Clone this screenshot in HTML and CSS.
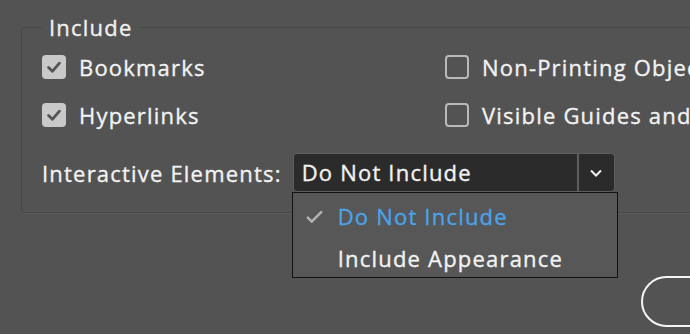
FILE: index.html
```html
<!DOCTYPE html>
<html lang="en">
<head>
    <meta charset="UTF-8">
    <title>Export Options</title>
    <link rel="stylesheet" href="styles.css">
</head>
<body>
    <div class="panel">
        <!-- Include group -->
        <fieldset class="group">
            <legend>Include</legend>
            <div class="options">
                <label class="check"><span class="box checked"><svg viewBox="0 0 22 22"><path d="M6 11.5l3.5 3.5 6.5-7.5" /></svg></span>Bookmarks</label>
                <label class="check"><span class="box"></span>Non-Printing Objects</label>
                <label class="check"><span class="box checked"><svg viewBox="0 0 22 22"><path d="M6 11.5l3.5 3.5 6.5-7.5" /></svg></span>Hyperlinks</label>
                <label class="check"><span class="box"></span>Visible Guides and Grids</label>
            </div>
            <div class="field">
                <span class="field-label">Interactive Elements:</span>
                <div class="select">
                    <span class="select-value">Do Not Include</span>
                    <span class="select-arrow"><svg viewBox="0 0 16 10"><path d="M3 2.5l5 5 5-5" /></svg></span>
                    <ul class="menu">
                        <li class="selected"><svg class="tick" viewBox="0 0 20 14"><path d="M2 7.5l5 5 11-11" /></svg>Do Not Include</li>
                        <li>Include Appearance</li>
                    </ul>
                </div>
            </div>
        </fieldset>

        <div class="footer">
            <button class="btn">Cancel</button>
        </div>
    </div>
</body>
</html>
```

FILE: styles.css
```css
body {
    margin: 0;
    background-color: #535353;
    color: #f2f2f2;
    font-family: "Open Sans", "Noto Sans", sans-serif;
    font-size: 22px;
    letter-spacing: 1.2px;
    -webkit-text-stroke: 0.35px currentColor;
    overflow: hidden;
    height: 334px;
}

.panel {
    width: 760px;
}

.group {
    margin: 15px 0 0 21px;
    padding: 0 0 0 20px;
    border: 1px solid #474747;
    border-radius: 3px;
    box-shadow: 0 1px 0 #5b5b5b;
    width: 760px;
    height: 198px;
    box-sizing: border-box;
}

.group legend {
    padding: 0 7px;
    line-height: 24px;
    color: #efefef;
}

.options {
    display: grid;
    grid-template-columns: 403px auto;
    row-gap: 23px;
    margin-top: 15px;
}

.check {
    display: flex;
    align-items: center;
    height: 25px;
    white-space: nowrap;
}

.box {
    width: 20px;
    height: 20px;
    border: 2px solid #b9b9b9;
    border-radius: 4px;
    margin-right: 13px;
    flex-shrink: 0;
}

.box.checked {
    width: 24px;
    height: 24px;
    border: none;
    background: #c9c9c9;
}

.box svg {
    width: 24px;
    height: 24px;
    display: block;
}

.box svg path {
    fill: none;
    stroke: #555;
    stroke-width: 2.6;
    stroke-linecap: round;
    stroke-linejoin: round;
}

.field {
    display: flex;
    align-items: center;
    margin-top: 26px;
}

.field-label {
    margin-right: 11px;
}

.select {
    position: relative;
    display: flex;
    width: 322px;
    height: 39px;
    background: #2b2b2b;
    border: 1px solid #5e5e5e;
    border-radius: 4px;
    box-sizing: border-box;
}

.select-value {
    flex: 1;
    padding-left: 8px;
    line-height: 37px;
}

.select-arrow {
    width: 35px;
    border-left: 2px solid #5e5e5e;
    display: flex;
    align-items: center;
    justify-content: center;
}

.select-arrow svg {
    width: 16px;
    height: 10px;
}

.select-arrow path {
    fill: none;
    stroke: #f2f2f2;
    stroke-width: 2;
}

.menu {
    position: absolute;
    top: 38px;
    left: -2px;
    width: 326px;
    margin: 0;
    padding: 2px 0 0;
    list-style: none;
    background: #575757;
    border: 1px solid #111;
    box-sizing: border-box;
}

.menu li {
    position: relative;
    padding-left: 45px;
    height: 42px;
    line-height: 42px;
}

.menu li:last-child {
    height: 40px;
}

.menu li.selected {
    color: #4aa3ea;
}

.tick {
    position: absolute;
    left: 12px;
    top: 15px;
    width: 19px;
    height: 13px;
}

.tick path {
    fill: none;
    stroke: #b3b3b3;
    stroke-width: 2.6;
}

.footer {
    display: flex;
    justify-content: flex-end;
    margin-top: 63px;
}

.btn {
    width: 180px;
    height: 51px;
    margin-right: -61px;
    border: 2px solid #f5f5f5;
    border-radius: 26px;
    background: transparent;
    color: #f5f5f5;
    font: inherit;
}
```
